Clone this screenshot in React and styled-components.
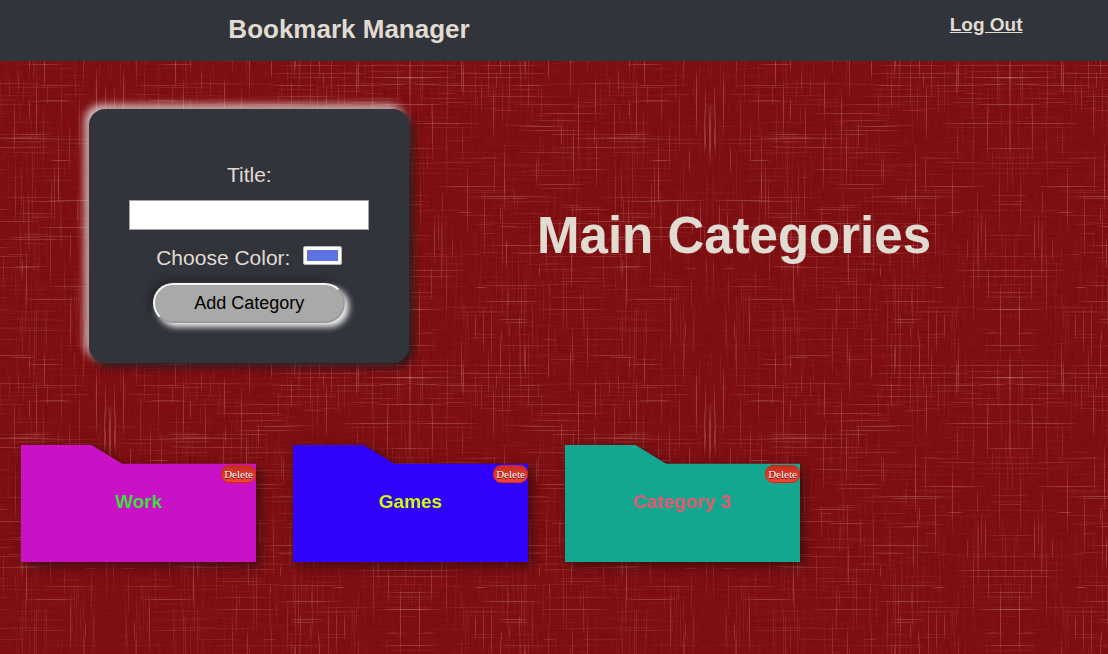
import React from "react";
import styled, { createGlobalStyle } from "styled-components";

const INK = "#31343b";
const PAPER = "#e1dbd2";

const GlobalStyle = createGlobalStyle`
  *, *::before, *::after { box-sizing: border-box; }
  body {
    margin: 0;
    background: #7c0f12;
    color: ${PAPER};
    font-family: "Liberation Sans", Arial, sans-serif;
  }
`;

const Page = styled.div`
  position: relative;
  min-height: 100vh;
  isolation: isolate;
`;

const Cloth = styled.svg`
  position: absolute;
  inset: 0;
  width: 100%;
  height: 100%;
  z-index: -1;
`;

const Header = styled.header`
  display: grid;
  grid-template-columns: 63fr 15fr 22fr;
  justify-items: center;
  align-items: start;
  padding: 12px 0 15px;
  background: ${INK};
`;

const Brand = styled.h1`
  margin: 0;
  font-size: 26px;
  line-height: 34px;
`;

const LogOut = styled.a`
  grid-column: 3;
  color: inherit;
  font-size: 19px;
  font-weight: bold;
  line-height: 26px;
`;

const Intro = styled.section`
  display: grid;
  grid-template-columns: 18fr 17fr 5fr;
  justify-items: center;
  align-items: center;
  padding: 48px 0 40px;
`;

const Heading = styled.h2`
  margin: 0;
  font-size: 51px;
  line-height: 60px;
  white-space: nowrap;
`;

const Form = styled.form`
  display: flex;
  flex-direction: column;
  align-items: center;
  width: 320px;
  padding: 54px 40px 40px;
  border-radius: 16px;
  background: ${INK};
  box-shadow: 4px 4px 8px rgba(30, 25, 27, 0.9), -4px -4px 8px rgba(255, 255, 255, 0.8);
`;

const Label = styled.label`
  font-size: 21px;
  line-height: 24px;
`;

const TextInput = styled.input`
  width: 100%;
  height: 30px;
  margin: 13px 0 16px;
  padding: 4px;
  border: 1px solid #a4a4a4;
  background: #fff;
  font: inherit;
  font-size: 18px;
`;

const ColorRow = styled.div`
  display: flex;
  align-items: flex-start;
  gap: 13px;
`;

const ColorInput = styled.input`
  appearance: none;
  width: 39px;
  height: 19px;
  padding: 0;
  border: 1px solid #b8b8b8;
  border-radius: 2px;
  background: #fff;
  &::-webkit-color-swatch-wrapper { padding: 3px; }
  &::-webkit-color-swatch { border: 0; }
`;

const AddButton = styled.button`
  width: 192px;
  height: 40px;
  margin: 13px 0 0;
  padding: 0;
  border: 2px solid;
  border-color: #f4f4f4 #9b9b9b #9b9b9b #f4f4f4;
  border-radius: 20px;
  background: #a9a9a9;
  color: #000;
  font: inherit;
  font-size: 18px;
  box-shadow: 4px 4px 6px #f2f2f2, -3px -3px 8px #222326;
`;

const Folders = styled.ul`
  display: flex;
  flex-wrap: wrap;
  gap: 37px;
  margin: 0;
  padding: 42px 21px;
  list-style: none;
`;

const FolderShadow = styled.li`
  filter: drop-shadow(4px 4px 6px rgba(20, 10, 10, 0.6));
`;

const Folder = styled.article`
  display: grid;
  grid-template-rows: 20px 1fr;
  width: 235px;
  height: 117px;
  padding-top: 20px;
  background: ${(p) => p.$fill};
  color: ${(p) => p.$ink};
  clip-path: polygon(0 0, 30% 0, 43% 16%, 100% 16%, 100% 100%, 0 100%);
`;

const FolderName = styled.h3`
  margin: 5px 0 0;
  font-size: 19px;
  line-height: 24px;
  text-align: center;
`;

const DeleteButton = styled.button`
  justify-self: end;
  width: 35px;
  height: 18px;
  padding: 0;
  border: 1px solid #d02718;
  border-radius: 8px;
  background: linear-gradient(#c62d1f, #f24437);
  color: #fff;
  font-family: "Liberation Serif", "Times New Roman", serif;
  font-size: 11px;
  line-height: 16px;
  text-shadow: 0 1px 0 #4a1010;
`;

const categories = [
  { name: "Work", fill: "#c912c6", ink: "#3ee23e" },
  { name: "Games", fill: "#3002fb", ink: "#cffd04" },
  { name: "Category 3", fill: "#13a78f", ink: "#ec586f" },
];

// Threads of the cloth, woven from a fixed seed so each render is the same.
function weave(count, size) {
  let seed = 2917;
  const next = () => {
    seed = (seed * 16807) % 2147483647;
    return seed / 2147483647;
  };
  return Array.from({ length: count }, (_, i) => {
    const length = 12 + next() * 60;
    return {
      vertical: i % 2 === 0,
      x: Math.floor(next() * size),
      y: Math.floor(next() * size),
      length,
      opacity: 0.06 + Math.pow(next(), 3) * 0.3,
    };
  });
}

const threads = weave(640, 300);

function Threads() {
  return threads.map((t, i) => (
    <rect
      key={i}
      x={t.x}
      y={t.y}
      width={t.vertical ? 1 : t.length}
      height={t.vertical ? t.length : 1}
      fill={t.vertical ? "url(#fadeV)" : "url(#fadeH)"}
      opacity={t.opacity}
    />
  ));
}

function Fade({ id, vertical }) {
  return (
    <linearGradient id={id} x1="0" y1="0" x2={vertical ? 0 : 1} y2={vertical ? 1 : 0}>
      <stop offset="0" stopColor="#d08a88" stopOpacity="0.2" />
      <stop offset="0.3" stopColor="#d08a88" />
      <stop offset="0.7" stopColor="#d08a88" />
      <stop offset="1" stopColor="#d08a88" stopOpacity="0.2" />
    </linearGradient>
  );
}

function Grain({ id, frequency, seed }) {
  return (
    <filter id={id} x="0" y="0" width="100%" height="100%" colorInterpolationFilters="sRGB">
      <feTurbulence type="fractalNoise" baseFrequency={frequency} numOctaves="2" seed={seed} />
      <feColorMatrix values="0 0 0 0 0.62  0 0 0 0 0.12  0 0 0 0 0.13  1.6 0 0 0 -0.66" />
    </filter>
  );
}

function ClothBackground() {
  return (
    <Cloth aria-hidden="true">
      <defs>
        <Fade id="fadeV" vertical />
        <Fade id="fadeH" />
        <Grain id="warp" frequency="0.7 0.06" seed="4" />
        <Grain id="weft" frequency="0.06 0.7" seed="9" />
        <g id="half"><Threads /></g>
        <pattern id="cloth" x="110" width="600" height="300" patternUnits="userSpaceOnUse">
          <use href="#half" />
          <use href="#half" y="-300" />
          <use href="#half" transform="translate(600 0) scale(-1 1)" />
          <use href="#half" transform="translate(600 -300) scale(-1 1)" />
        </pattern>
      </defs>
      <rect width="100%" height="100%" fill="#7a0d10" />
      <rect width="100%" height="100%" filter="url(#warp)" opacity="0.35" />
      <rect width="100%" height="100%" filter="url(#weft)" opacity="0.35" />
      <rect width="100%" height="100%" fill="url(#cloth)" />
    </Cloth>
  );
}

export default function App() {
  return (
    <Page>
      <GlobalStyle />
      <ClothBackground />
      <Header>
        <Brand>Bookmark Manager</Brand>
        <LogOut href="#logout">Log Out</LogOut>
      </Header>
      <main>
        <Intro>
          <Form onSubmit={(e) => e.preventDefault()}>
            <Label htmlFor="title">Title:</Label>
            <TextInput id="title" type="text" />
            <ColorRow>
              <Label htmlFor="color">Choose Color:</Label>
              <ColorInput id="color" type="color" defaultValue="#5e72e4" />
            </ColorRow>
            <AddButton type="submit">Add Category</AddButton>
          </Form>
          <Heading>Main Categories</Heading>
        </Intro>
        <Folders>
          {categories.map((c) => (
            <FolderShadow key={c.name}>
              <Folder $fill={c.fill} $ink={c.ink}>
                <DeleteButton type="button">Delete</DeleteButton>
                <FolderName>{c.name}</FolderName>
              </Folder>
            </FolderShadow>
          ))}
        </Folders>
      </main>
    </Page>
  );
}
